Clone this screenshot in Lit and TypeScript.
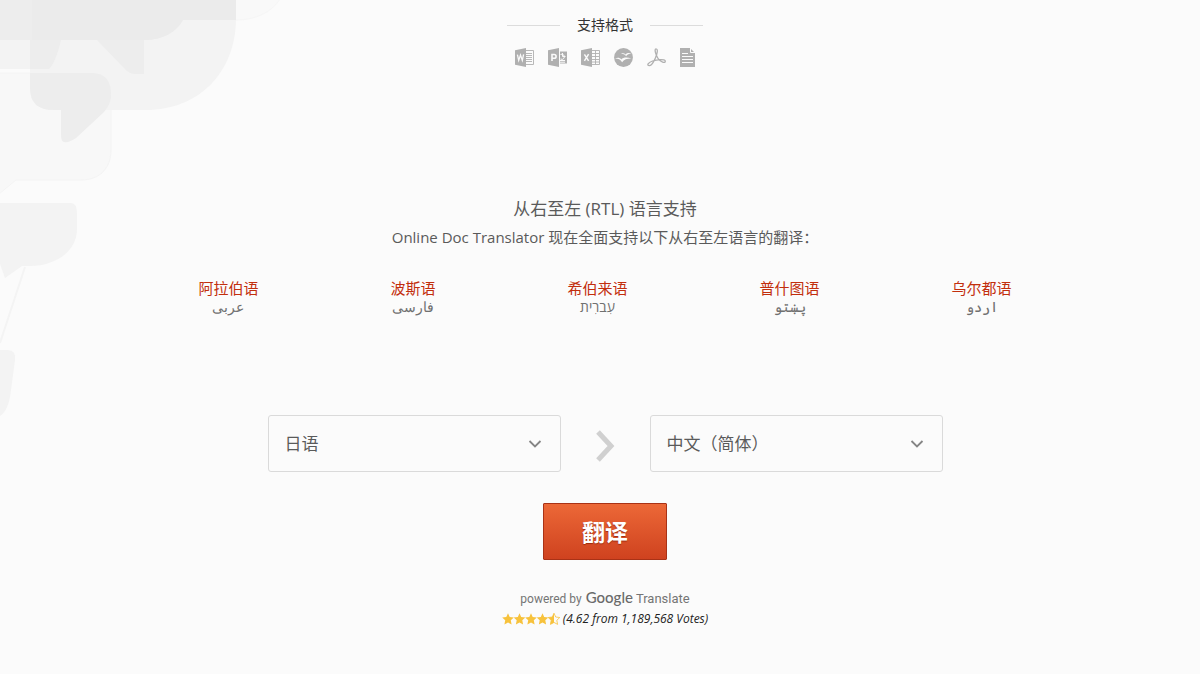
import { LitElement, html, css, svg } from "lit";
import { customElement } from "lit/decorators.js";

const languages = [
  { name: "阿拉伯语", native: "عربى", lang: "ar" },
  { name: "波斯语", native: "فارسی", lang: "fa" },
  { name: "希伯来语", native: "עִברִית", lang: "he" },
  { name: "普什图语", native: "پښتو", lang: "ps" },
  { name: "乌尔都语", native: "اردو", lang: "ur" },
];

// Office-style cover shared by the Word, PowerPoint and Excel icons
const cover = svg`<path fill="currentColor" d="M0 2.2 11 0v19L0 16.8z"/>`;

const formats = [
  {
    label: "Word",
    width: 20,
    art: svg`${cover}<path fill="none" stroke="#fafafa" stroke-width="1.3" d="m2.400 6.600 1.300 5.800 1.800-5.300 1.800 5.300 1.300-6"/>
      <path fill="none" stroke="currentColor" stroke-width=".9" d="M11 2.500h7.500v14H11M11 5.500h6M11 7.500h6M11 9.500h6M11 11.500h6M11 13.500h6"/>`,
  },
  {
    label: "PowerPoint",
    width: 20,
    art: svg`${cover}<path fill="none" stroke="#fafafa" stroke-width="1.600" d="M4 13V6.500h2.200a1.900 1.900 0 0 1 0 3.800H4"/>
      <path fill="currentColor" d="M12 3.500h7v12h-7z"/><path fill="none" stroke="#fafafa" d="M12.500 6.500a2.600 2.600 0 1 1 0 4.500M14.500 5v3.500h3M12 12.500h5M12 14.200h5"/>`,
  },
  {
    label: "Excel",
    width: 20,
    art: svg`${cover}<path fill="none" stroke="#fafafa" stroke-width="1.500" d="m3.400 6.400 4.200 6.400M7.600 6.200l-4.200 6.600"/>
      <path fill="none" stroke="currentColor" stroke-width=".9" d="M11 2.500h7.500v14H11M11 5.500h7M11 8.500h7M11 11.500h7M11 14h7M14.500 2.500v14"/>`,
  },
  {
    label: "OpenOffice",
    width: 20,
    art: svg`<circle cx="9.500" cy="9.500" r="9.400" fill="currentColor"/>
      <path fill="#fafafa" d="M7 5.800c2-.9 3.600-.5 4.500.7 1.600-1.700 3.800-1.900 6.300-.9-2.700 0-4.500.8-5.700 2.600C10.800 6.500 9.300 5.800 7 5.800zM1 10.600c2.600-1.200 4.800-.9 6.200.8 2.200-2.100 5.600-2.500 10.300-.8-4.400-.1-7.400 1-9.400 3.600C6.500 11.700 4.300 10.600 1 10.600z"/>`,
  },
  {
    label: "PDF",
    width: 20,
    art: svg`<path fill="none" stroke="currentColor" stroke-width="1.300" stroke-linejoin="round" d="M9 .8c2 0 1.400 3.400.6 5.900C8.600 10 5.400 17.600 2.300 17.600c-2.700 0-1.500-3 3.200-4.600 4.500-1.500 12.800-2.200 12.800.2 0 2.700-4.800.5-7-2.400C9.200 8 6.800.8 9 .8z"/>`,
  },
  {
    label: "Text",
    width: 16,
    art: svg`<path fill="currentColor" d="M0 0h10l5 5v14H0z"/><path fill="none" stroke="#fafafa" stroke-width="1" d="M10.500 0v4.500H15M2 5.500h6M2 8.500h11M2 11.500h11M2 14.500h11"/>`,
  },
];

const starPath = "M6 .2 7.700 4l4.100.5-3 2.800.8 4.100L6 9.400l-3.600 2 .8-4.100-3-2.800L4.300 4z";

@customElement("app-root")
export class AppRoot extends LitElement {
  static styles = css`
    * { box-sizing: border-box; }
    :host {
      display: block;
      position: relative;
      min-height: 100vh;
      overflow: hidden;
      background: #fbfbfb;
      color: #5a5a5a;
      font-family: "Open Sans", "Noto Sans CJK SC", sans-serif;
    }
    h2, p { margin: 0; font-weight: 400; }
    .bubbles { position: absolute; top: 0; left: 0; width: 290px; height: 420px; }
    main {
      position: relative;
      display: flex;
      flex-direction: column;
      align-items: center;
      padding: 14px 0 40px 10px;
    }
    .formats-title {
      display: flex;
      align-items: center;
      gap: 17px;
      font-size: 14px;
      line-height: 22px;
      color: #333;
    }
    .formats-title::before, .formats-title::after {
      content: "";
      width: 53px;
      height: 1px;
      background: #dcdcdc;
    }
    .formats { display: flex; gap: 13px; margin-top: 12px; color: #b0b0b0; }
    .formats svg { display: block; height: 19px; }
    .rtl { margin-top: 128px; text-align: center; }
    .rtl h2, .rtl p { line-height: 28px; }
    .rtl h2 { font-size: 17px; }
    .rtl p { font-size: 15px; }
    .languages {
      display: flex;
      justify-content: center;
      gap: 132px;
      margin: 27px 0 0;
      padding: 0;
      list-style: none;
      text-align: center;
    }
    .languages a { display: block; color: #c22e0d; font-size: 15px; line-height: 20px; text-decoration: none; }
    .native { display: block; color: #707070; font-size: 14px; line-height: 18px; }
    form { display: flex; flex-direction: column; align-items: center; margin-top: 99px; }
    .pair { display: flex; align-items: center; }
    .field { position: relative; }
    select {
      display: block;
      width: 293px;
      height: 57px;
      padding: 0 48px 0 16px;
      appearance: none;
      border: 1px solid #dadada;
      border-radius: 3px;
      background: transparent;
      color: #5a5a5a;
      font: inherit;
      font-size: 17px;
    }
    .chevron { position: absolute; top: 24px; right: 19px; width: 14px; height: 10px; pointer-events: none; }
    .arrow { width: 19px; height: 34px; margin: 4px 35px 0; }
    button {
      width: 124px;
      height: 57px;
      margin-top: 31px;
      padding: 0 0 2px;
      border: 1px solid #a93216;
      border-radius: 1px;
      background: linear-gradient(#ec6837, #cf421f);
      color: #fff;
      font: inherit;
      font-size: 23px;
      font-weight: 700;
      text-shadow: 0 1px 1px #9c2c10;
    }
    .powered {
      display: flex;
      align-items: baseline;
      gap: 4px;
      margin-top: 28px;
      font-family: Roboto, sans-serif;
      font-size: 12px;
      line-height: 19px;
      color: #757575;
    }
    .brand { font-family: Lato, sans-serif; font-size: 15px; font-weight: 500; color: #6a6a6a; }
    .product { font-size: 13px; }
    .rating { display: flex; align-items: center; gap: 3px; font-size: 12px; line-height: 20px; color: #222; font-style: italic; }
    .stars { width: 58px; height: 12px; }
  `;

  render() {
    return html`
      <svg class="bubbles" viewBox="0 0 290 420" aria-hidden="true">
        <path fill="#f9f9f9" stroke="#f6f6f6" d="M180 20h56c20 0 36-8 44-21H180z" />
        <path fill="#f8f8f8" stroke="#f4f4f4" d="M-1 73h91c14 0 21 7 21 21v56c0 18-11 30-30 30H16L-1 194z" />
        <path fill="#f3f3f3" d="M0 39h61c-4 21-10 30-22 30H0z" />
        <path fill="#f3f3f3" d="M30 0v88q0 22 24 22h92c52 0 90-37 90-92V0z" />
        <path fill="#ededed" d="M30 73h62q20 0 19 24-1 8-7 15L76 138q-7 5-12 4-3 0-3-8v-24h-7q-24 0-24-22zM30 40h31q-5 22-12 29H30z" />
        <path fill="#ededed" d="M0 0h236v20h-53q-12 20-39 20v34h-9q-6 0-11-6L97 40H0z" />
        <path fill="#ebebeb" d="M32 0h204v20h-53q-12 20-39 20H32z" />
        <path fill="#f3f3f3" d="M0 203h71q6 0 6 11v15c0 22-21 37-47 37H22L5 278 0 264z" />
        <path fill="none" stroke="#f4f4f4" stroke-width="2" d="M25 267 0 343" />
        <path fill="#f3f3f3" d="M0 350h8q8 0 7 10l-4 30q-2 20-11 26z" />
      </svg>
      <main>
        <h2 class="formats-title">支持格式</h2>
        <div class="formats">
          ${formats.map((f) => html`<svg width=${f.width} viewBox="0 0 ${f.width} 19" role="img" aria-label=${f.label}>${f.art}</svg>`)}
        </div>
        <section class="rtl">
          <h2>从右至左 (RTL) 语言支持</h2>
          <p>Online Doc Translator 现在全面支持以下从右至左语言的翻译：</p>
        </section>
        <ul class="languages">
          ${languages.map((l) => html`<li><a href="#${l.lang}">${l.name}</a><span class="native" lang=${l.lang} dir="rtl">${l.native}</span></li>`)}
        </ul>
        <form @submit=${(e: Event) => e.preventDefault()}>
          <div class="pair">
            ${this.picker("源语言", "日语")}
            <svg class="arrow" viewBox="0 0 19 34" aria-hidden="true"><path fill="none" stroke="#d0d0d0" stroke-width="5" d="m2 3 13 14L2 31" /></svg>
            ${this.picker("目标语言", "中文（简体）")}
          </div>
          <button type="submit">翻译</button>
        </form>
        <div class="powered"><span>powered by</span><span><span class="brand">Google</span> <span class="product">Translate</span></span></div>
        <div class="rating">
          <svg class="stars" viewBox="0 0 58 12" aria-hidden="true">
            ${[0, 1, 2, 3].map((i) => svg`<path fill="#f7c23c" transform="translate(${i * 11.5} 0)" d=${starPath}/>`)}
            <g transform="translate(46 0)"><path fill="none" stroke="#f7c23c" stroke-width=".8" d=${starPath} /><path fill="#f7c23c" d="M6 .2v9.200l-3.600 2 .8-4.100-3-2.800L4.300 4z" /></g>
          </svg>
          <span>(4.62 from 1,189,568 Votes)</span>
        </div>
      </main>
    `;
  }

  private picker(label: string, value: string) {
    return html`<div class="field">
      <select aria-label=${label}><option>${value}</option></select>
      <svg class="chevron" viewBox="0 0 14 10" aria-hidden="true"><path fill="none" stroke="#858585" stroke-width="1.800" d="m1.500 2 5.500 5.500L12.500 2" /></svg>
    </div>`;
  }
}
